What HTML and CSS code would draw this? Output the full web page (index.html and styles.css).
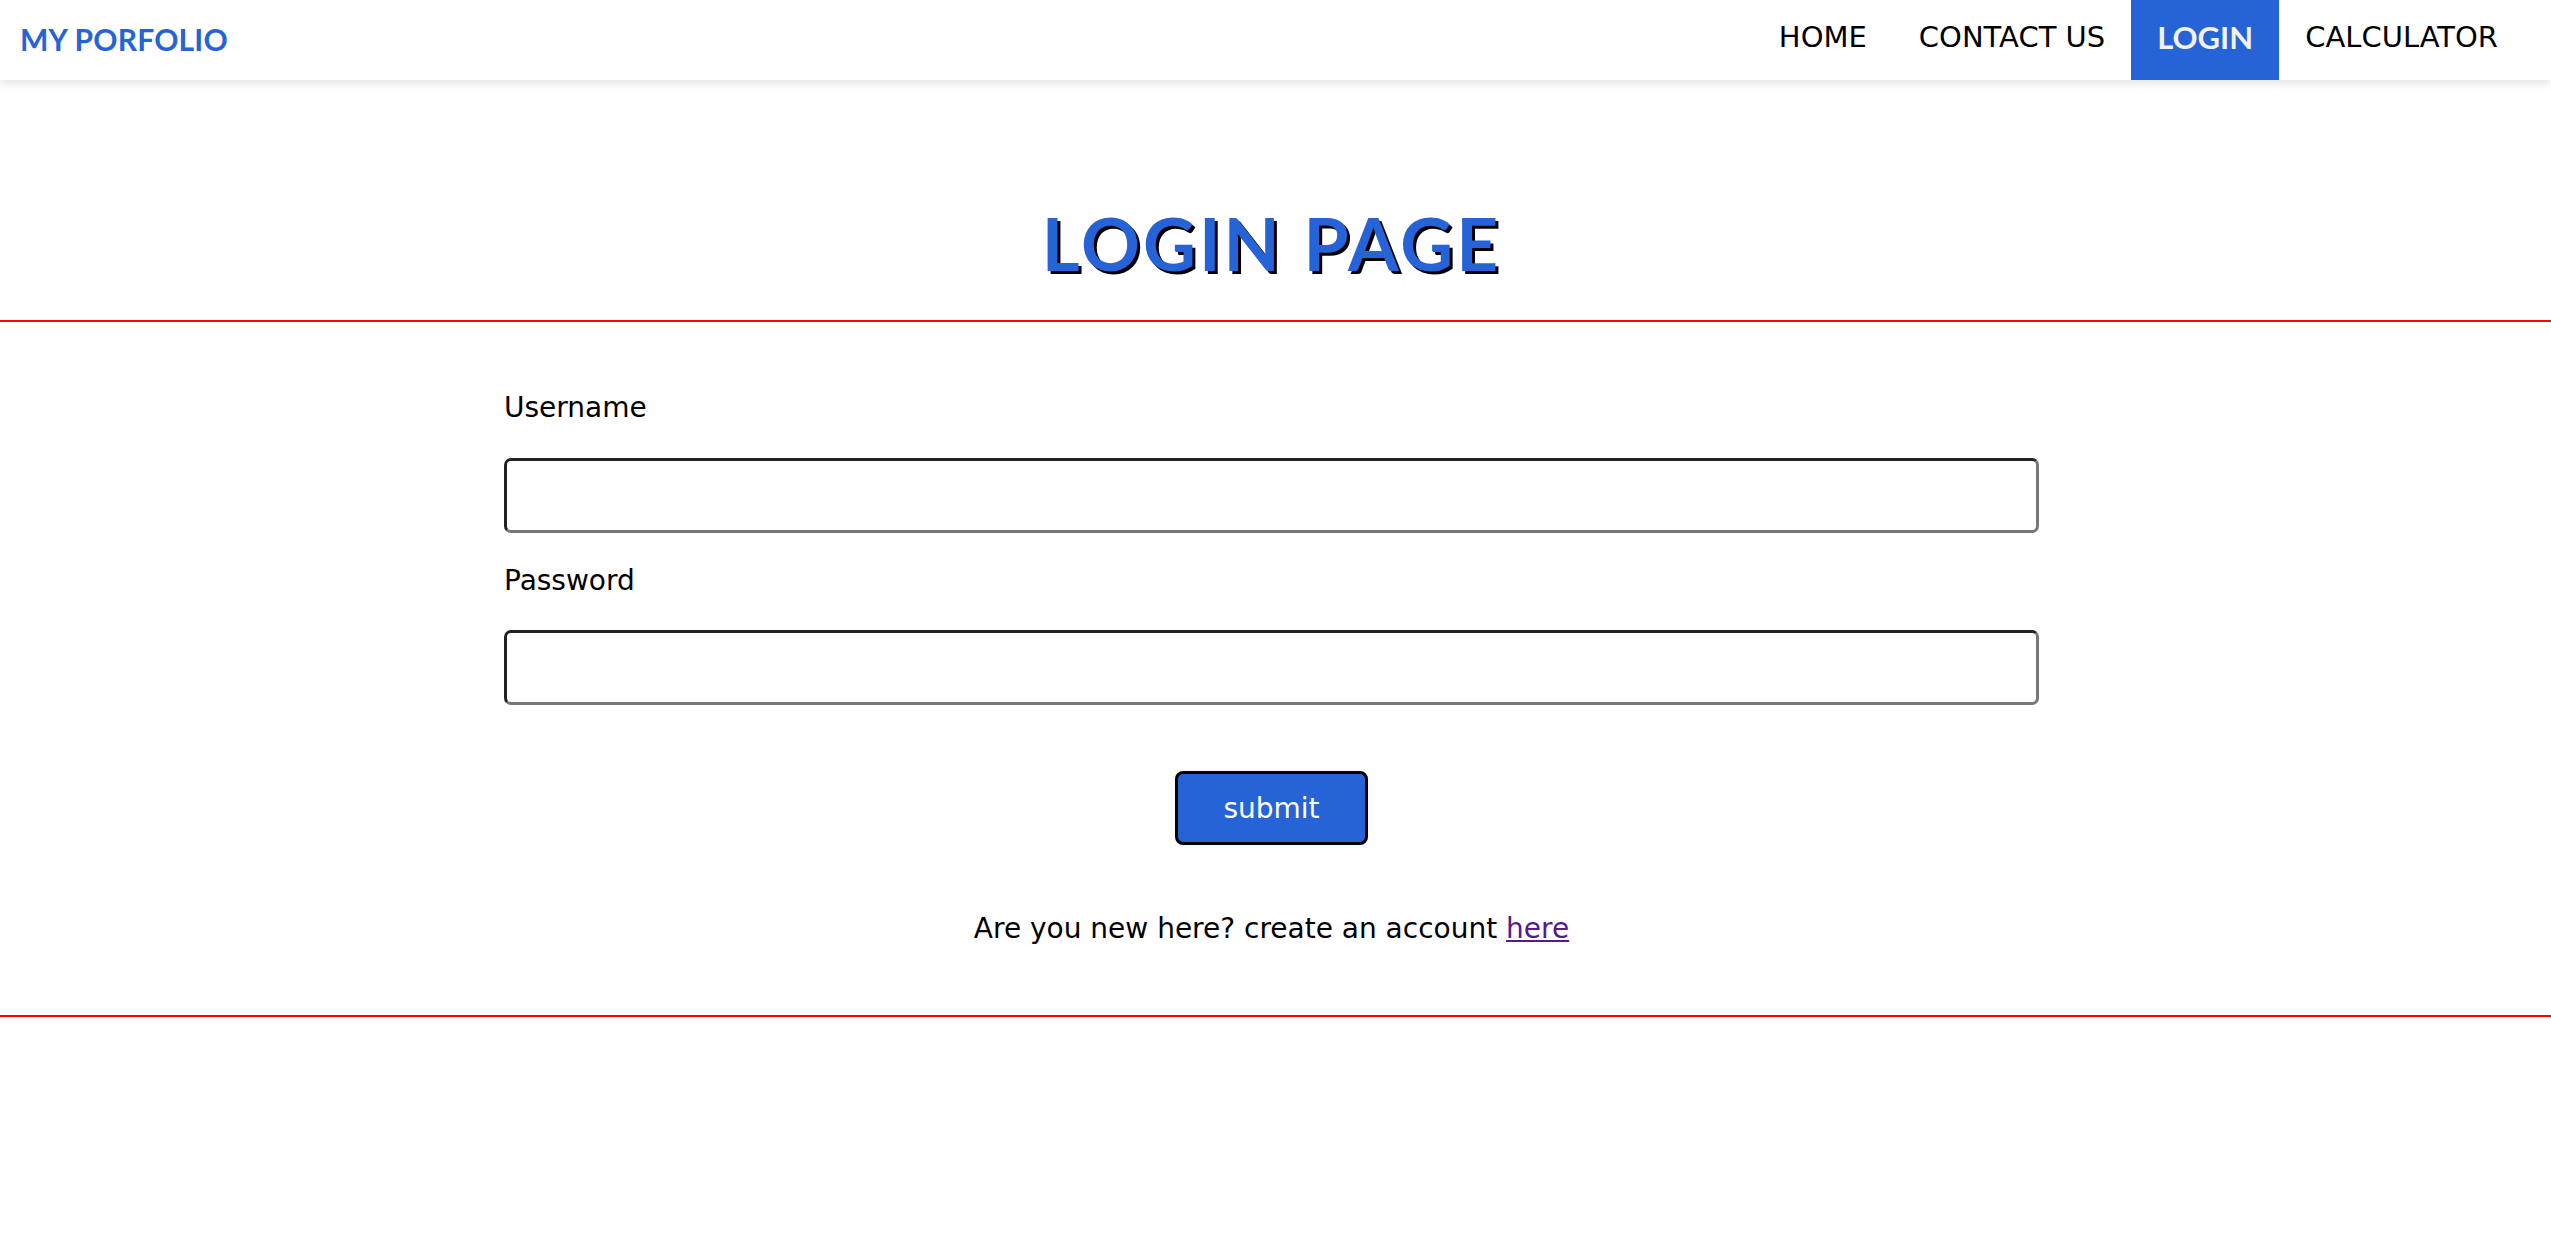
FILE: index.html
```html
<!DOCTYPE html>
<html lang="en">
<head>
<meta charset="utf-8">
<title>Login</title>
<link rel="stylesheet" href="styles.css">
</head>
<body>
<header class="navbar">
  <a class="brand" href="#">MY PORFOLIO</a>
  <nav>
    <ul class="nav-list">
      <li><a href="#">HOME</a></li>
      <li><a href="#">CONTACT US</a></li>
      <li><a class="active" href="#">LOGIN</a></li>
      <li><a href="#">CALCULATOR</a></li>
    </ul>
  </nav>
</header>
<main class="content">
  <div class="title-wrap">
    <h1 class="page-title">LOGIN PAGE</h1>
  </div>
  <section class="form-wrap">
    <form class="login-form">
      <label class="field-label" for="user">Username</label>
      <input class="field-input" id="user" type="text">
      <label class="field-label field-label-2" for="pass">Password</label>
      <input class="field-input field-input-2" id="pass" type="password">
      <div class="btn-row"><button class="submit-btn" type="button">submit</button></div>
      <p class="signup">Are you new here? create an account <a href="#" class="signup-link">here</a></p>
    </form>
  </section>
</main>
</body>
</html>
```
FILE: styles.css
```css
* { box-sizing: border-box; }
html, body { margin: 0; padding: 0; background: #fff; }
body { font-family: "DejaVu Sans", sans-serif; color: #000; }

.navbar {
  height: 80px;
  display: flex;
  align-items: center;
  justify-content: space-between;
  box-shadow: 0 3px 9px rgba(0,0,0,0.12);
  position: relative;
  z-index: 1;
}
.brand {
  padding-left: 20px;
  padding-bottom: 3px;
  font-family: "Lato", sans-serif;
  font-weight: 700;
  font-size: 30px;
  color: #2563d6;
  text-decoration: none;
  letter-spacing: 0.2px;
}
.nav-list {
  list-style: none;
  margin: 0;
  padding: 0 27px 0 0;
  display: flex;
  height: 80px;
}
.nav-list a {
  display: block;
  height: 80px;
  line-height: 75px;
  padding: 0 26px;
  font-size: 29px;
  color: #000;
  text-decoration: none;
}
.nav-list a.active {
  background: #2563d6;
  color: #f2f2f2;
  font-family: "Lato", sans-serif;
  font-weight: 700;
  font-size: 31px;
  padding: 0 26px;
}

.content { padding-right: 8px; }
.title-wrap {
  padding-top: 113px;
  padding-bottom: 27px;
  border-bottom: 2px solid #f00;
  margin-right: -8px;
  text-align: center;
  padding-right: 8px;
}
.page-title {
  margin: 0;
  font-family: "Lato", sans-serif;
  font-weight: 700;
  font-size: 73px;
  letter-spacing: 3px;
  line-height: 100px;
  color: #2563d6;
  text-shadow: 3px 3px 0 #000;
}

.form-wrap {
  border-bottom: 2px solid #f00;
  margin-right: -8px;
  padding: 68px 8px 68px 0;
}
.login-form {
  width: 1535px;
  margin: 0 auto;
  display: flex;
  flex-direction: column;
}
.field-label {
  display: block;
  height: 36px;
  line-height: 36px;
  font-size: 28px;
  margin-bottom: 32px;
}
.field-label-2 { margin-bottom: 31px; }
.field-input {
  display: block;
  width: 100%;
  height: 75px;
  border: 3px solid;
  border-color: #222 #777 #777 #222;
  border-radius: 7px;
  background: #fff;
  margin: 0 0 30px;
  font-size: 28px;
  padding: 0 12px;
}
.field-input-2 { margin-bottom: 66px; }
.btn-row { display: flex; justify-content: center; margin-bottom: 66px; }
.submit-btn {
  width: 193px;
  height: 74px;
  background: #2563d6;
  color: #fff;
  border: 3px solid #000;
  border-radius: 8px;
  font-family: "DejaVu Sans", sans-serif;
  font-size: 28px;
}
.signup {
  margin: 0;
  height: 36px;
  line-height: 36px;
  text-align: center;
  font-size: 28px;
}
.signup-link { color: #551a8b; }
```
